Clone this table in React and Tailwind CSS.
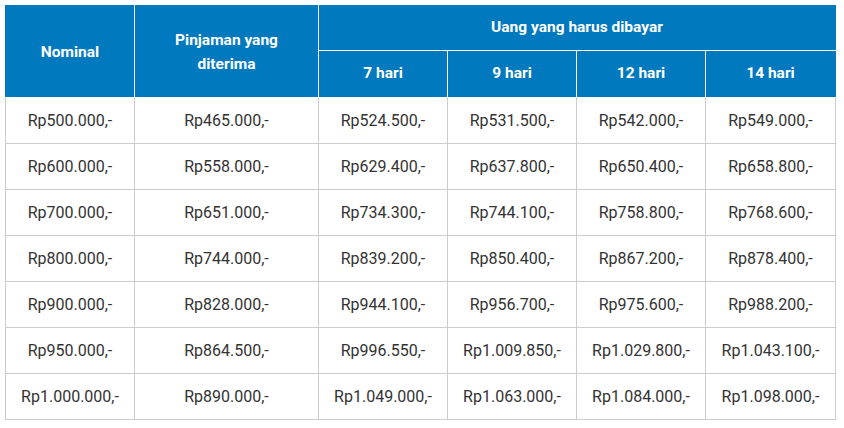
import React from "react";

const rows = [
  ["Rp500.000,-", "Rp465.000,-", "Rp524.500,-", "Rp531.500,-", "Rp542.000,-", "Rp549.000,-"],
  ["Rp600.000,-", "Rp558.000,-", "Rp629.400,-", "Rp637.800,-", "Rp650.400,-", "Rp658.800,-"],
  ["Rp700.000,-", "Rp651.000,-", "Rp734.300,-", "Rp744.100,-", "Rp758.800,-", "Rp768.600,-"],
  ["Rp800.000,-", "Rp744.000,-", "Rp839.200,-", "Rp850.400,-", "Rp867.200,-", "Rp878.400,-"],
  ["Rp900.000,-", "Rp828.000,-", "Rp944.100,-", "Rp956.700,-", "Rp975.600,-", "Rp988.200,-"],
  ["Rp950.000,-", "Rp864.500,-", "Rp996.550,-", "Rp1.009.850,-", "Rp1.029.800,-", "Rp1.043.100,-"],
  ["Rp1.000.000,-", "Rp890.000,-", "Rp1.049.000,-", "Rp1.063.000,-", "Rp1.084.000,-", "Rp1.098.000,-"],
];

export default function App() {
  return (
    <div className="w-[844px] h-[428px] bg-white pt-[5px] pl-[5px]" style={{ fontFamily: "Roboto, 'Liberation Sans', sans-serif" }}>
      <table className="border-collapse table-fixed w-[830px]">
        <colgroup>
          <col className="w-[129px]" />
          <col className="w-[184px]" />
          <col className="w-[129px]" />
          <col className="w-[129px]" />
          <col className="w-[129px]" />
          <col className="w-[130px]" />
        </colgroup>
        <thead>
          <tr className="h-[45px]">
            <th rowSpan={2} className="bg-[#0079be] text-white text-[15.5px] font-bold border border-white border-t-[#0079be] border-l-[#0079be] leading-[24px]">Nominal</th>
            <th rowSpan={2} className="bg-[#0079be] text-white text-[15.5px] font-bold border border-white border-t-[#0079be] leading-[24px] px-8">Pinjaman yang diterima</th>
            <th colSpan={4} className="bg-[#0079be] text-white text-[15.5px] font-bold border border-white border-t-[#0079be] border-r-[#0079be]">Uang yang harus dibayar</th>
          </tr>
          <tr className="h-[47px]">
            <th className="bg-[#0079be] text-white text-[15.5px] font-bold border border-white">7 hari</th>
            <th className="bg-[#0079be] text-white text-[15.5px] font-bold border border-white">9 hari</th>
            <th className="bg-[#0079be] text-white text-[15.5px] font-bold border border-white">12 hari</th>
            <th className="bg-[#0079be] text-white text-[15.5px] font-bold border border-white border-r-[#0079be]">14 hari</th>
          </tr>
        </thead>
        <tbody>
          {rows.map((r, i) => (
            <tr key={i} className="h-[46px]">
              {r.map((c, j) => (
                <td key={j} className="border border-[#cccccc] text-center text-[16px] text-[#333333]">{c}</td>
              ))}
            </tr>
          ))}
        </tbody>
      </table>
    </div>
  );
}
